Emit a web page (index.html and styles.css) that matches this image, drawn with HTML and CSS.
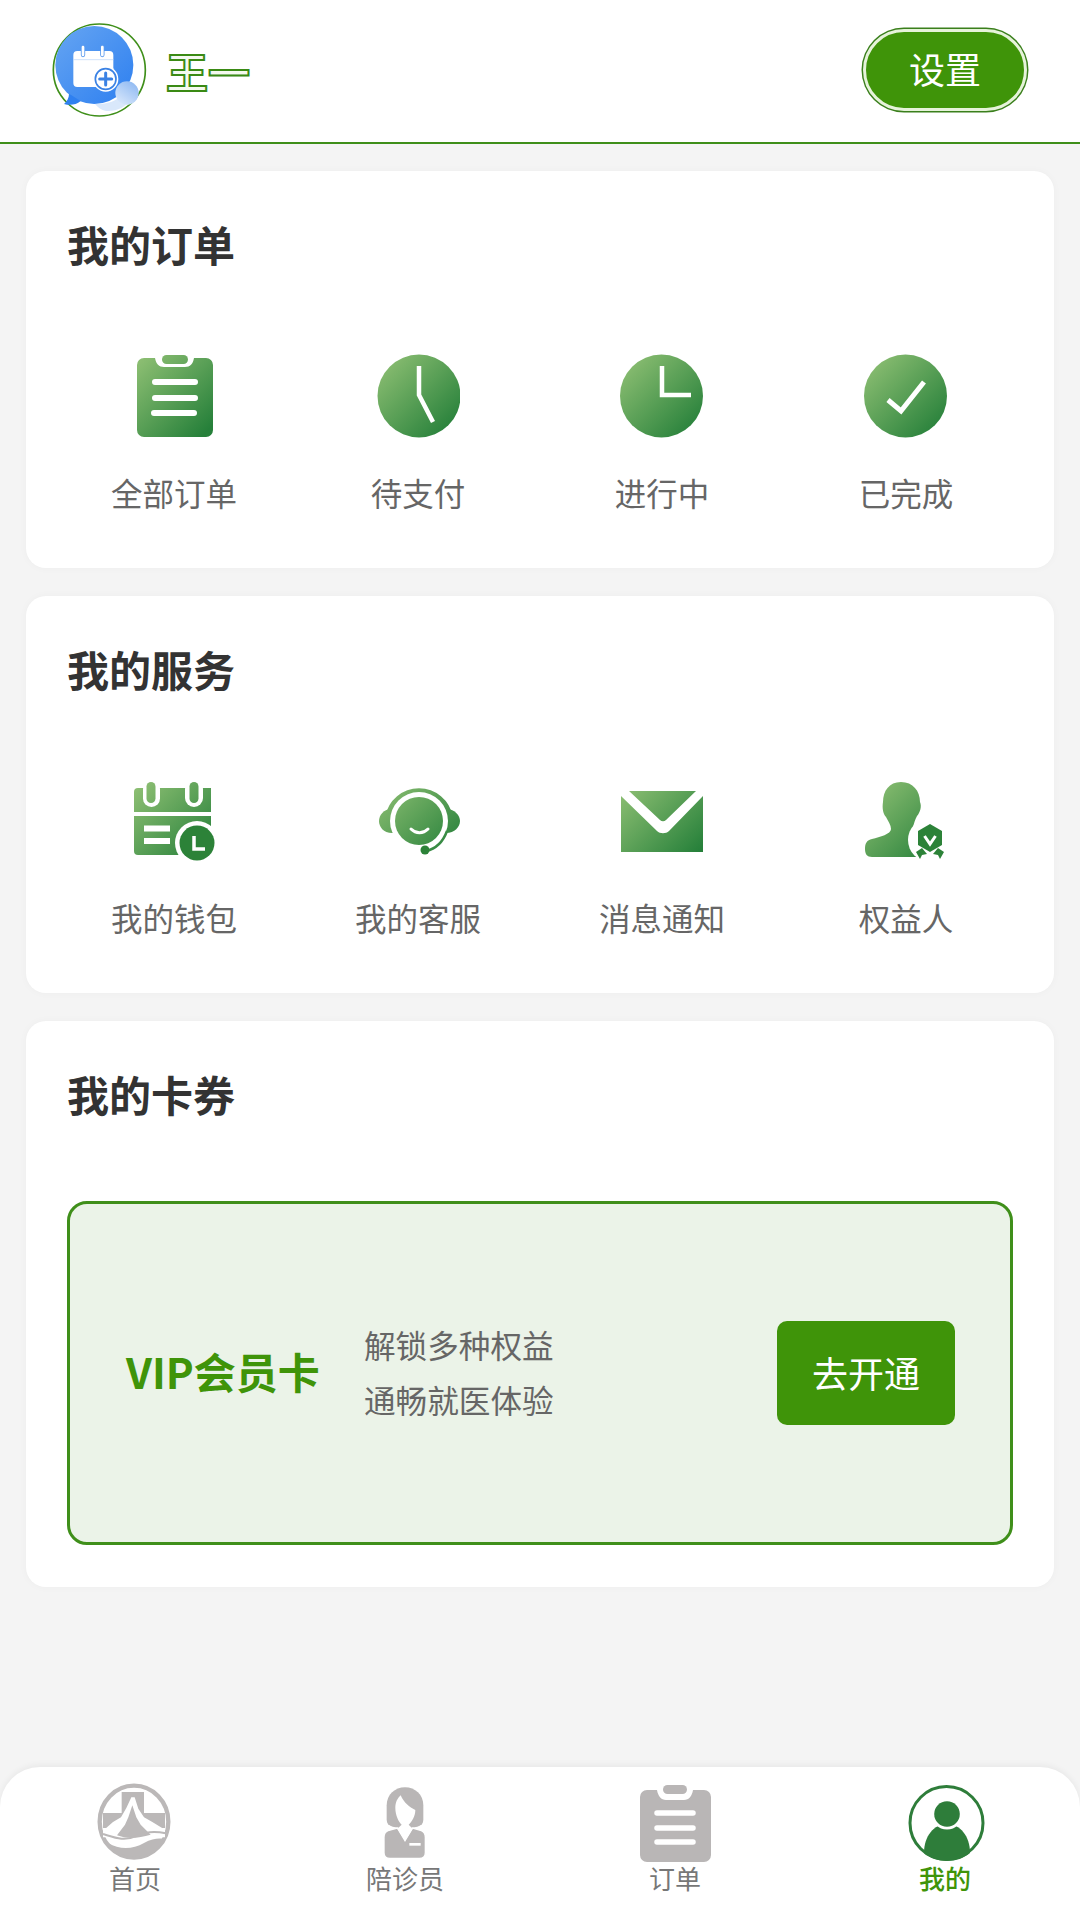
FILE: index.html
```html
<!DOCTYPE html>
<html lang="zh-CN">
<head>
    <meta charset="UTF-8">
    <meta name="viewport" content="width=device-width, initial-scale=1.0">
    <title>我的</title>
    <link rel="stylesheet" href="styles.css">
</head>
<body>

    <svg class="svg-defs" width="0" height="0">
        <defs>
            <linearGradient id="green" gradientUnits="userSpaceOnUse" x1="8" y1="8" x2="76" y2="76">
                <stop offset="0" stop-color="#8abd71"/>
                <stop offset="1" stop-color="#26803a"/>
            </linearGradient>
            <linearGradient id="blue" x1="0" y1="0" x2="1" y2="1">
                <stop offset="0" stop-color="#66a5f2"/>
                <stop offset="1" stop-color="#2d7ff0"/>
            </linearGradient>
            <linearGradient id="blob" x1="0.8" y1="0" x2="0.1" y2="1">
                <stop offset="0" stop-color="#8fb9f2"/>
                <stop offset="1" stop-color="#dceafc"/>
            </linearGradient>
        </defs>
    </svg>

    <header class="header">
        <svg class="avatar" viewBox="0 0 330 330">
            <circle cx="163" cy="165" r="138" fill="#fff" stroke="#3f8f1a" stroke-width="5"/>
            <circle cx="148" cy="150" r="117" fill="url(#blue)"/>
            <path d="M72 236c0 12-6 24-15 31 18 5 36 3 50-9z" fill="#2f80f0"/>
            <path d="M150 267c30 2 60-6 80-26l30 10c-20 28-50 40-80 36-12-2-22-10-30-20z" fill="#d9e8fb"/>
            <circle cx="246" cy="234" r="35" fill="url(#blob)"/>
            <rect x="85" y="108" width="120" height="108" rx="12" fill="#fff"/>
            <path d="M85 134h120" stroke="#b9d4f7" stroke-width="2"/>
            <path d="M114 96v24M172 96v24" stroke="#5a9aee" stroke-width="13" stroke-linecap="round"/>
            <path d="M114 96v24M172 96v24" stroke="#fff" stroke-width="8" stroke-linecap="round"/>
            <circle cx="182" cy="192" r="38" fill="#fff"/>
            <circle cx="182" cy="192" r="31" fill="#fff" stroke="#3b82e4" stroke-width="5"/>
            <path d="M164 192h36M182 174v36" stroke="#3b82e4" stroke-width="9" stroke-linecap="round"/>
        </svg>
        <div class="user-name">王一</div>
        <button class="settings-btn">设置</button>
    </header>

    <main class="content">
        <section class="card">
            <h2 class="card-title">我的订单</h2>
            <div class="icon-grid">
                <div class="icon-item">
                    <svg class="icon" viewBox="0 0 84 84">
                        <path d="M12 4h11c1 6 4 9 9 9h21c5 0 8-3 9-9h12a7 7 0 0 1 7 7v65a7 7 0 0 1-7 7H12a7 7 0 0 1-7-7V11a7 7 0 0 1 7-7z" fill="url(#green)"/>
                        <rect x="30" y="1" width="26" height="9" rx="4.5" fill="url(#green)"/>
                        <path d="M23 28h40M23 44h40M22 59h40" stroke="#fff" stroke-width="6" stroke-linecap="round"/>
                    </svg>
                    <span class="icon-label">全部订单</span>
                </div>
                <div class="icon-item">
                    <svg class="icon" viewBox="0 0 84 84">
                        <circle cx="43" cy="42" r="41.5" fill="url(#green)"/>
                        <path d="M43 12v29l14 27" fill="none" stroke="#fff" stroke-width="4.5"/>
                    </svg>
                    <span class="icon-label">待支付</span>
                </div>
                <div class="icon-item">
                    <svg class="icon" viewBox="0 0 84 84">
                        <circle cx="41.5" cy="42" r="41.5" fill="url(#green)"/>
                        <path d="M42 12v29h29" fill="none" stroke="#fff" stroke-width="4.5"/>
                    </svg>
                    <span class="icon-label">进行中</span>
                </div>
                <div class="icon-item">
                    <svg class="icon" viewBox="0 0 84 84">
                        <circle cx="41.5" cy="42" r="41.5" fill="url(#green)"/>
                        <path d="M24 46l13 11 23-29" fill="none" stroke="#fff" stroke-width="5"/>
                    </svg>
                    <span class="icon-label">已完成</span>
                </div>
            </div>
        </section>

        <section class="card">
            <h2 class="card-title">我的服务</h2>
            <div class="icon-grid">
                <div class="icon-item">
                    <svg class="icon" viewBox="0 0 84 84">
                        <path d="M6 9h73v24H2V13a4 4 0 0 1 4-4z" fill="url(#green)"/>
                        <path d="M2 37h77v39H6a4 4 0 0 1-4-4z" fill="url(#green)"/>
                        <rect x="11" y="1" width="17" height="27" rx="8.5" fill="#fff"/>
                        <rect x="53" y="1" width="18" height="27" rx="9" fill="#fff"/>
                        <rect x="14.5" y="3" width="9" height="21" rx="4.5" fill="url(#green)"/>
                        <rect x="57.5" y="3" width="9" height="21" rx="4.5" fill="url(#green)"/>
                        <path d="M12 49.5h26M12 62h26" stroke="#fff" stroke-width="6"/>
                        <circle cx="65" cy="64" r="22" fill="#fff"/>
                        <circle cx="65" cy="64" r="17.5" fill="#2c8238"/>
                        <path d="M62 57v13h11" fill="none" stroke="#fff" stroke-width="3.5"/>
                    </svg>
                    <span class="icon-label">我的钱包</span>
                </div>
                <div class="icon-item">
                    <svg class="icon" viewBox="0 0 84 84">
                        <path d="M18 30C8 29 3 36 3 42s5 13 15 12z" fill="url(#green)"/>
                        <path d="M68 30c10-1 16 6 16 12s-6 13-16 12z" fill="url(#green)"/>
                        <path d="M12 38a31.500 31.500 0 0 1 62 0" fill="none" stroke="url(#green)" stroke-width="5.500"/>
                        <circle cx="43" cy="42" r="29" fill="#fff"/>
                        <path d="M71 52C67 63 59 70 50 72" fill="none" stroke="url(#green)" stroke-width="2.5"/>
                        <circle cx="43" cy="42" r="24" fill="url(#green)"/>
                        <path d="M35 50c5 5 12 5 17 0" fill="none" stroke="#fff" stroke-width="3" stroke-linecap="round"/>
                        <circle cx="49" cy="71" r="4.5" fill="#2c8238"/>
                    </svg>
                    <span class="icon-label">我的客服</span>
                </div>
                <div class="icon-item">
                    <svg class="icon" viewBox="0 0 84 84">
                        <path d="M9 12h67L46 41a4 4 0 0 1-6 0z" fill="url(#green)"/>
                        <path d="M1 17l36 35c3 3 9 3 12 0l34-35v56H1z" fill="url(#green)"/>
                    </svg>
                    <span class="icon-label">消息通知</span>
                </div>
                <div class="icon-item">
                    <svg class="icon" viewBox="0 0 84 84">
                        <path d="M37 3C49 3 56 12 56 23c2 4 0 11-3 14-2 4-3 7-4 11l13 12v18H8c-5 0-7-3-7-8 0-6 2-9 7-10 8-2 19-5 19-10 0-4-3-8-5-12-3-3-4-9-3-15C19 12 25 3 37 3z" fill="url(#green)"/>
                        <circle cx="66" cy="61" r="22" fill="#fff"/>
                        <path d="M66 45l12 7v14l-12 7-12-7V52z" fill="#2c8238"/>
                        <path d="M60.5 57l5.5 8 5.5-8" fill="none" stroke="#fff" stroke-width="3"/>
                        <path d="M52 73l6-4 5 6-5 1-2 4zM80 73l-6-4-5 6 5 1 2 4z" fill="#2c8238"/>
                    </svg>
                    <span class="icon-label">权益人</span>
                </div>
            </div>
        </section>

        <section class="card">
            <h2 class="card-title">我的卡券</h2>
            <div class="vip-box">
                <div class="vip-name">VIP会员卡</div>
                <div class="vip-desc">
                    <div>解锁多种权益</div>
                    <div>通畅就医体验</div>
                </div>
                <button class="vip-btn">去开通</button>
            </div>
        </section>
    </main>

    <nav class="tab-bar">
        <div class="tab-item">
            <svg class="tab-icon" viewBox="3 0 270 270">
                <ellipse cx="135" cy="131" rx="103" ry="108" fill="none" stroke="#bbb8b8" stroke-width="13"/>
                <path d="M98 42h67v63h63v45H42v-45h56z" fill="#bbb8b8"/>
                <path d="M42 158l30-26 24-14 16-28 15-32h10l11 34 17 26 25 14 38 23v23H42z" fill="#fff"/>
                <path d="M84 172l24-32 10-22 12-36 12 36 13 22 30 30c-35 10-70 14-101 2z" fill="#bbb8b8"/>
                <path d="M42 168c33 10 63 24 103 5 25-12 55-14 85-7" fill="none" stroke="#bbb8b8" stroke-width="6"/>
                <path d="M58 195c32 20 72 20 107 0 25-13 45-15 57-12-17 42-57 53-87 53-35 0-60-16-77-41z" fill="#bbb8b8"/>
            </svg>
            <span class="tab-label">首页</span>
        </div>
        <div class="tab-item">
            <svg class="tab-icon" viewBox="0 0 270 270">
                <path d="M135 28c30 0 55 22 55 54v43c0 11-6 17-18 21l-22 4h-30l-22-4c-12-4-18-10-18-21V82c0-32 25-54 55-54z" fill="#b9b6b6"/>
                <path d="M84 158l28-8 23 38 23-38 26 8c8 3 12 10 12 20v46c0 12-8 17-18 17H90c-12 0-18-6-18-17v-46c0-10 4-17 12-20z" fill="#b9b6b6" stroke="#fff" stroke-width="4"/>
                <path d="M122 52C112 62 106 72 106 90c0 22 10 42 19 50l-13 12 23 36 23-36-12-12c10-9 20-26 20-44C148 88 132 74 122 52z" fill="#fff"/>
                <path d="M148 199h34" stroke="#fff" stroke-width="8"/>
            </svg>
            <span class="tab-label">陪诊员</span>
        </div>
        <div class="tab-item">
            <svg class="tab-icon" viewBox="0 0 90 90">
                <path d="M17 12h10c1 6 4 10 9 10h18c5 0 8-4 9-10h11a7 7 0 0 1 7 7v58a7 7 0 0 1-7 7H17a7 7 0 0 1-7-7V19a7 7 0 0 1 7-7z" fill="#b9b6b6"/>
                <rect x="33" y="7" width="24" height="9" rx="4.5" fill="#b9b6b6"/>
                <path d="M27 35h36M27 50h36M27 64h36" stroke="#fff" stroke-width="5.5" stroke-linecap="round"/>
            </svg>
            <span class="tab-label">订单</span>
        </div>
        <div class="tab-item tab-active">
            <svg class="tab-icon" viewBox="0 0 90 90">
                <circle cx="46.5" cy="45" r="36.5" fill="#fff" stroke="#2e7d3a" stroke-width="3"/>
                <path d="M24 75c0-17 10-29 23-29s23 12 23 29c-6 5-14 8-23 8s-17-3-23-8z" fill="#2e7d3a"/>
                <circle cx="47" cy="36" r="15.5" fill="#fff"/>
                <circle cx="47" cy="36" r="12.8" fill="#2e7d3a"/>
            </svg>
            <span class="tab-label">我的</span>
        </div>
    </nav>

</body>
</html>
```

FILE: styles.css
```css
* {
    box-sizing: border-box;
}
body {
    margin: 0;
    height: 1920px;
    display: flex;
    flex-direction: column;
    background-color: #f4f4f4;
    font-family: "Noto Sans CJK SC", "Noto Sans", sans-serif;
}
.svg-defs {
    display: block;
    height: 0;
}
.header {
    display: flex;
    align-items: center;
    height: 144px;
    padding: 0 53px 2px 45px;
    background: white;
    border-bottom: 2px solid #3f8f1a;
}
.avatar {
    width: 110px;
    height: 110px;
}
.user-name {
    margin-left: 11px;
    font-size: 42px;
    font-weight: 700;
    color: #f4f9ef;
    -webkit-text-stroke: 2px #3a8a14;
}
.settings-btn {
    margin-left: auto;
    width: 164px;
    height: 82px;
    padding: 0 0 4px;
    border: 3px solid #e6f3da;
    border-radius: 41px;
    background: #3f9409;
    box-shadow: 0 0 0 1.5px #3a7f1c;
    color: white;
    font-family: inherit;
    font-size: 36px;
}
.content {
    display: flex;
    flex-direction: column;
    gap: 28px;
    padding: 27px 26px 0;
}
.card {
    height: 397px;
    padding-top: 43px;
    background: white;
    border-radius: 20px;
    box-shadow: 0 0 8px rgba(0, 0, 0, 0.03);
}
.card-title {
    margin: 0;
    padding: 0 41px;
    font-size: 42px;
    line-height: 60px;
    font-weight: 700;
    color: #333;
}
.icon-grid {
    display: grid;
    grid-template-columns: repeat(4, 1fr);
    margin-top: 80px;
    padding: 0 26px;
}
.icon-item {
    display: flex;
    flex-direction: column;
    align-items: center;
}
.icon {
    width: 84px;
    height: 84px;
}
.icon-label {
    margin-top: 32px;
    font-size: 31.5px;
    line-height: 44px;
    color: #666;
}
.card:last-child {
    height: 566px;
}
.vip-box {
    display: flex;
    align-items: center;
    height: 344px;
    margin: 77px 41px 0;
    padding: 0 55px 0 56px;
    background: #ebf3e8;
    border: 3px solid #3f8f1a;
    border-radius: 20px;
}
.vip-name {
    width: 238px;
    padding-bottom: 6px;
    font-size: 42px;
    font-weight: 700;
    color: #3f9409;
}
.vip-desc {
    padding-bottom: 3px;
    font-size: 31.6px;
    line-height: 55px;
    color: #666;
}
.vip-btn {
    margin-left: auto;
    width: 178px;
    height: 104px;
    padding: 0 0 2px;
    border: none;
    border-radius: 10px;
    background: #3f9409;
    color: white;
    font-family: inherit;
    font-size: 36px;
}
.tab-bar {
    display: grid;
    grid-template-columns: repeat(4, 1fr);
    height: 153px;
    margin-top: auto;
    padding-top: 11px;
    background: white;
    border-radius: 40px 40px 0 0;
    box-shadow: 0 -2px 6px rgba(0, 0, 0, 0.05);
}
.tab-item {
    display: flex;
    flex-direction: column;
    align-items: center;
}
.tab-icon {
    width: 90px;
    height: 90px;
}
.tab-label {
    margin-top: -2px;
    font-size: 26px;
    line-height: 24px;
    color: #777;
}
.tab-active .tab-label {
    color: #3f9409;
    font-weight: 500;
}
```
